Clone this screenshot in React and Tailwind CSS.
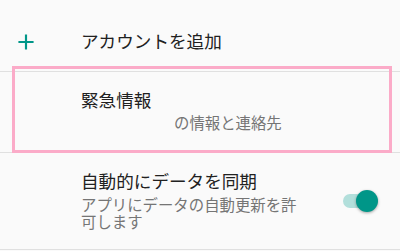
import React from "react";

const font = { fontFamily: 'Roboto, "Noto Sans CJK JP", sans-serif' };

const PlusIcon = () => (
  <svg width="26" height="26" viewBox="0 0 24 24" className="text-[#009688]">
    <path fill="currentColor" d="M19 13h-6v6h-2v-6H5v-2h6V5h2v6h6v2z" />
  </svg>
);

const Toggle = () => (
  <div className="relative w-[35px] h-[22px]">
    <div className="absolute left-0 top-[4px] w-[33px] h-[14px] rounded-full bg-[#b2dfdb]" />
    <div className="absolute right-0 top-0 w-[22px] h-[22px] rounded-full bg-[#009688] shadow-[0_1px_3px_rgba(0,0,0,0.35)]" />
  </div>
);

export default function App() {
  return (
    <div
      className="relative w-[400px] h-[251px] overflow-hidden bg-[#fafafa]"
      style={font}
    >
      {/* add account */}
      <div className="h-[72px] border-b border-[#e0e0e0] flex items-center pt-[13px]">
        <div className="w-[81px] flex pl-[13px]">
          <PlusIcon />
        </div>
        <span className="text-[17.6px] leading-[24px] text-[#212121]">
          アカウントを追加
        </span>
      </div>

      {/* emergency info */}
      <div className="h-[81px] border-b border-[#e0e0e0] flex flex-col pl-[81px] pt-[17px]">
        <span className="text-[17.6px] leading-[24px] text-[#212121]">
          緊急情報
        </span>
        <span className="mt-[1px] pl-[93px] text-[15.4px] leading-[20px] text-[#757575]">
          の情報と連絡先
        </span>
      </div>

      {/* auto sync */}
      <div className="h-[97px] border-b border-[#e0e0e0] flex items-center pl-[81px] pr-[22px]">
        <div className="w-[224px] flex flex-col">
          <span className="text-[17.6px] leading-[24px] text-[#212121]">
            自動的にデータを同期
          </span>
          <span className="mt-[4px] text-[15.4px] leading-[17px] text-[#757575]">
            アプリにデータの自動更新を許可します
          </span>
        </div>
        <div className="ml-auto">
          <Toggle />
        </div>
      </div>

      {/* highlight */}
      <div className="absolute left-[12px] top-[66px] w-[380px] h-[87px] border-[3px] border-[#fbabc8] pointer-events-none" />
    </div>
  );
}
